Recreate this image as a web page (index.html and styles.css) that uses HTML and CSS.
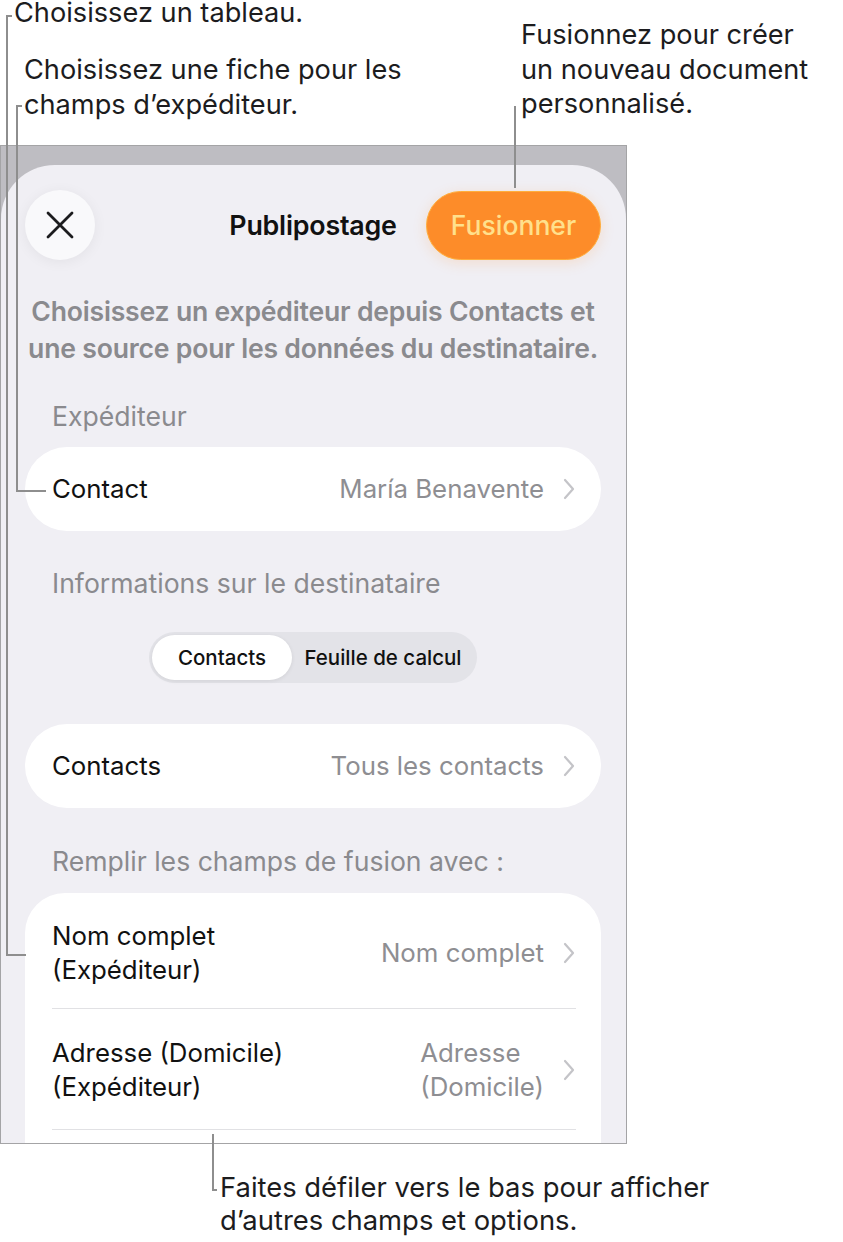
FILE: index.html
```html
<!DOCTYPE html>
<html lang="fr">
<head>
	<meta charset="utf-8">
	<title>Publipostage</title>
	<link rel="stylesheet" href="styles.css">
</head>
<body>
	<div class="page">
		<div class="captions">
			<div class="callout callout-table">Choisissez un tableau.</div>
			<div class="callout callout-sender">Choisissez une fiche pour les<br>champs d’expéditeur.</div>
			<div class="callout callout-merge">Fusionnez pour créer<br>un nouveau document<br>personnalisé.</div>
		</div>

		<div class="leader leader-table"></div>
		<div class="tick tick-table"></div>
		<div class="leader leader-sender"></div>
		<div class="tick tick-sender"></div>
		<div class="leader leader-merge"></div>
		<div class="leader leader-scroll"></div>
		<div class="tick tick-scroll"></div>

		<div class="shot">
			<div class="sheet">
				<div class="sheet-header">
					<div class="close-btn">
						<svg width="30" height="30" viewBox="0 0 30 30">
							<path d="M3 3 L27 27 M27 3 L3 27" stroke="#1c1c1e" stroke-width="2.8" stroke-linecap="round" fill="none"/>
						</svg>
					</div>
					<div class="sheet-title">Publipostage</div>
					<div class="merge-btn">Fusionner</div>
				</div>

				<p class="intro">Choisissez un expéditeur depuis Contacts et<br>une source pour les données du destinataire.</p>

				<div class="section-label">Expéditeur</div>
				<div class="card">
					<div class="row row-single">
						<span class="row-label">Contact</span>
						<span class="row-value">María Benavente</span>
						<svg class="chevron" width="12" height="22" viewBox="0 0 12 22"><path d="M2 2 L10 11 L2 20" stroke="#c4c4c8" stroke-width="2.2" fill="none" stroke-linecap="round" stroke-linejoin="round"/></svg>
					</div>
				</div>

				<div class="section-label section-label-gap">Informations sur le destinataire</div>
				<div class="segmented">
					<div class="segment segment-on">Contacts</div>
					<div class="segment">Feuille de calcul</div>
				</div>

				<div class="card">
					<div class="row row-single">
						<span class="row-label">Contacts</span>
						<span class="row-value">Tous les contacts</span>
						<svg class="chevron" width="12" height="22" viewBox="0 0 12 22"><path d="M2 2 L10 11 L2 20" stroke="#c4c4c8" stroke-width="2.2" fill="none" stroke-linecap="round" stroke-linejoin="round"/></svg>
					</div>
				</div>

				<div class="section-label section-label-fields">Remplir les champs de fusion avec :</div>
				<div class="card card-list">
					<div class="row row-double row-first">
						<span class="row-label">Nom complet<br>(Expéditeur)</span>
						<span class="row-value">Nom complet</span>
						<svg class="chevron" width="12" height="22" viewBox="0 0 12 22"><path d="M2 2 L10 11 L2 20" stroke="#c4c4c8" stroke-width="2.2" fill="none" stroke-linecap="round" stroke-linejoin="round"/></svg>
					</div>
					<div class="row row-double">
						<span class="row-label">Adresse (Domicile)<br>(Expéditeur)</span>
						<span class="row-value row-value-left">Adresse<br>(Domicile)</span>
						<svg class="chevron" width="12" height="22" viewBox="0 0 12 22"><path d="M2 2 L10 11 L2 20" stroke="#c4c4c8" stroke-width="2.2" fill="none" stroke-linecap="round" stroke-linejoin="round"/></svg>
					</div>
				</div>
			</div>
		</div>

		<div class="callout-bottom">Faites défiler vers le bas pour afficher<br>d’autres champs et options.</div>
	</div>
</body>
</html>
```

FILE: styles.css
```css
body {
	margin: 0;
	background-color: #fff;
	font-family: Inter, "Noto Sans", sans-serif;
	color: #1c1c1e;
}
.page {
	position: relative;
	width: 843px;
	height: 1242px;
	overflow: hidden;
}

/* callouts round the screenshot */
.captions {
	position: relative;
	height: 145px;
}
.callout {
	position: absolute;
	font-size: 27.2px;
	line-height: 34.5px;
	color: #1c1c1e;
	white-space: nowrap;
}
.callout-table {
	left: 14px;
	top: 0;
	line-height: 26px;
}
.callout-sender {
	left: 24px;
	top: 53px;
}
.callout-merge {
	left: 521px;
	top: 18px;
}
.callout-bottom {
	margin-top: 27px;
	padding-left: 220px;
	font-size: 27.4px;
	line-height: 33px;
	white-space: nowrap;
}
.leader {
	position: absolute;
	border-color: #8e8e8e;
	border-style: solid;
	border-width: 0;
}
.leader-table {
	left: 6px;
	top: 15px;
	width: 18px;
	height: 939px;
	border-left-width: 2px;
	border-bottom-width: 2px;
}
.leader-sender {
	left: 16px;
	top: 105px;
	width: 28px;
	height: 385px;
	border-left-width: 2px;
	border-bottom-width: 2px;
}
.leader-merge {
	left: 514px;
	top: 106px;
	height: 82px;
	border-left-width: 2px;
}
.leader-scroll {
	left: 212px;
	top: 1134px;
	height: 57px;
	border-left-width: 2px;
}
.tick {
	position: absolute;
	height: 2px;
	background-color: #8e8e8e;
}
.tick-table {
	left: 6px;
	top: 15px;
	width: 6px;
}
.tick-sender {
	left: 16px;
	top: 105px;
	width: 6px;
}
.tick-scroll {
	left: 212px;
	top: 1189px;
	width: 5px;
}

/* the phone screenshot */
.shot {
	width: 625px;
	height: 997px;
	border: 1px solid #a4a4a6;
	background-color: #bebdc2;
	overflow: hidden;
}
.sheet {
	margin-top: 19px;
	padding: 25px 25px 0 24px;
	background-color: #f0eff4;
	border-radius: 54px 54px 0 0;
	height: 1100px;
}
.sheet-header {
	display: grid;
	grid-template-columns: 1fr auto 1fr;
	align-items: center;
	height: 70px;
}
.close-btn {
	width: 70px;
	height: 70px;
	border-radius: 50%;
	background-color: #f9f9fb;
	box-shadow: 0 2px 14px rgba(0, 0, 0, 0.06);
	display: flex;
	justify-content: center;
	align-items: center;
}
.sheet-title {
	font-size: 26.8px;
	font-weight: 600;
	color: #111;
	letter-spacing: -0.2px;
}
.merge-btn {
	justify-self: end;
	width: 175px;
	height: 69px;
	box-sizing: border-box;
	border-radius: 35px;
	background-color: #fd8c29;
	border: 1.5px solid #ffae3c;
	box-shadow: 0 3px 14px rgba(253, 140, 41, 0.18);
	color: #ffe08c;
	font-size: 26.5px;
	font-weight: 500;
	display: flex;
	justify-content: center;
	align-items: center;
}
.intro {
	margin: 33px 0 0;
	text-align: center;
	font-size: 26.6px;
	line-height: 37px;
	font-weight: 600;
	color: #8a8a8e;
	letter-spacing: -0.2px;
	white-space: nowrap;
}
.section-label {
	margin: 34px 0 16px 27px;
	font-size: 26.6px;
	line-height: 30px;
	color: #8a8a8e;
}
.section-label-gap {
	margin-top: 37px;
}
.section-label-fields {
	margin-top: 38px;
	margin-bottom: 17px;
}
.card {
	background-color: #fff;
	border-radius: 42px;
}
.card-list {
	border-radius: 40px 40px 0 0;
	padding-bottom: 60px;
}
.row {
	display: flex;
	align-items: center;
	margin: 0 25px 0 27px;
	font-size: 25.8px;
	line-height: 34px;
}
.row-single {
	height: 84px;
}
.row-double {
	padding: 27px 0 25px;
	border-bottom: 1.5px solid #e1e1e4;
}
.row-first {
	padding: 26px 0 21px;
}
.row-label {
	flex: 1;
	color: #111;
}
.row-value {
	color: #8e8e92;
	text-align: right;
}
.row-value-left {
	text-align: left;
}
.chevron {
	margin-left: 19px;
	margin-right: 1px;
}
.segmented {
	display: flex;
	width: 328px;
	height: 51px;
	box-sizing: border-box;
	margin: 34px auto 41px;
	padding: 3px;
	border-radius: 26px;
	background-color: #e3e3e8;
}
.segment {
	flex: 1;
	display: flex;
	justify-content: center;
	align-items: center;
	font-size: 20.5px;
	font-weight: 500;
	color: #111;
	border-radius: 23px;
}
.segment-on {
	flex: 0 0 140px;
	background-color: #fff;
	box-shadow: 0 1px 4px rgba(0, 0, 0, 0.08);
}
```
